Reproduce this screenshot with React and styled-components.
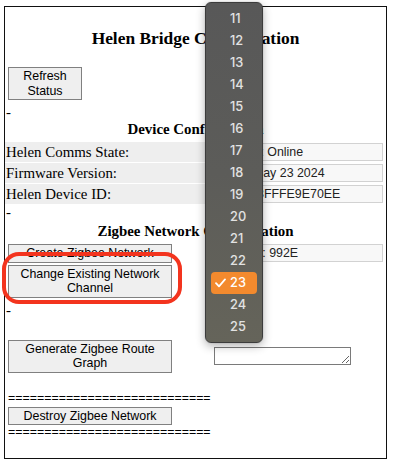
import React from "react";
import styled, { createGlobalStyle } from "styled-components";

const GlobalStyle = createGlobalStyle`
  html, body {
    margin: 0;
    padding: 0;
    background: #fff;
  }
  body {
    font-family: "Liberation Serif", "Times New Roman", serif;
    color: #000;
  }
`;

const Page = styled.div`
  position: relative;
  width: 397px;
  height: 472px;
  padding: 6px 0 0 4px;
  box-sizing: border-box;
  overflow: hidden;
`;

const Frame = styled.div`
  width: 383px;
  height: 453px;
  border: 1px solid #111;
  box-sizing: border-box;
  display: flex;
  flex-direction: column;
`;

const Title = styled.h3`
  margin: 21px 0 0;
  text-align: center;
  font-size: 17.4px;
  line-height: 20px;
  font-weight: 700;
`;

const Heading = styled.h4`
  margin: ${(p) => p.$top || 0}px 0 0;
  text-align: center;
  font-size: 14.9px;
  line-height: 17px;
  font-weight: 700;
`;

const Dash = styled.div`
  margin-top: ${(p) => p.$top || 0}px;
  padding-left: 1px;
  font-size: 14.9px;
  line-height: 17px;
`;

const Button = styled.button`
  display: block;
  width: ${(p) => p.$width || 164}px;
  margin: ${(p) => p.$top || 0}px 0 0 3px;
  padding: 1px 5px;
  box-sizing: border-box;
  border: 1px solid #808080;
  border-radius: 0;
  background: #efefef;
  color: #000;
  font-family: "Liberation Sans", Arial, sans-serif;
  font-size: 12.4px;
  line-height: 14.5px;
  text-align: center;
`;

const InfoGrid = styled.div`
  margin-top: 4px;
  display: grid;
  grid-template-columns: 204px 174px;
  column-gap: 3px;
  row-gap: 1px;
`;

const Label = styled.div`
  height: 20px;
  padding-left: 1px;
  background: #eeeeee;
  font-size: 14.9px;
  line-height: 20px;
  white-space: nowrap;
`;

const Cell = styled.div`
  display: flex;
  align-items: center;
`;

const Field = styled.input`
  width: 171px;
  height: 18px;
  margin: 0;
  padding: 0 2px;
  box-sizing: border-box;
  border: 1px solid #d2d2d2;
  border-radius: 0;
  background: #f8f8f8;
  color: #222;
  font-family: "Liberation Sans", Arial, sans-serif;
  font-size: 12.4px;
`;

const Row = styled.div`
  margin-top: ${(p) => p.$top || 0}px;
  display: grid;
  grid-template-columns: 204px 174px;
  column-gap: 3px;
  align-items: center;
`;

const Picker = styled.select`
  width: 46px;
  height: 18px;
  font-size: 12px;
`;

const Notes = styled.textarea`
  width: 137px;
  height: 18px;
  margin: 0 0 0 2px;
  padding: 0;
  box-sizing: border-box;
  border: 1px solid #7a7a7a;
  resize: both;
  font-size: 12px;
`;

const EqLine = styled.div`
  margin-top: ${(p) => p.$top || 0}px;
  padding-left: 3px;
  font-family: "Liberation Sans", Arial, sans-serif;
  font-size: 12.4px;
  line-height: 15px;
  white-space: nowrap;
`;

const Highlight = styled.div`
  position: absolute;
  left: 2px;
  top: 252px;
  width: 180px;
  height: 52px;
  box-sizing: border-box;
  border: 4px solid #f3341e;
  border-radius: 17px;
  pointer-events: none;
`;

const Popup = styled.div`
  position: absolute;
  left: 205px;
  top: 2px;
  width: 58px;
  height: 341px;
  box-sizing: border-box;
  padding: 5px 0;
  border: 1px solid #3c3c3c;
  border-radius: 6px;
  background: linear-gradient(#585858 0%, #5c5c59 50%, #65645a 100%);
  box-shadow: 0 3px 10px rgba(0, 0, 0, 0.3), 0 0 1px rgba(0, 0, 0, 0.4);
`;

const Item = styled.div`
  position: relative;
  height: 22px;
  margin: 0 ${(p) => (p.$selected ? 5 : 0)}px;
  padding-left: ${(p) => (p.$selected ? 19 : 24)}px;
  border-radius: 4px;
  background: ${(p) => (p.$selected ? "#f38a2e" : "transparent")};
  color: ${(p) => (p.$selected ? "#fff" : "#e2e2e2")};
  font-family: "Inter", "Liberation Sans", sans-serif;
  font-size: 12.8px;
  font-weight: 500;
  line-height: 22px;
`;

const Check = styled.svg`
  position: absolute;
  left: 4px;
  top: 6px;
`;

const channels = [11, 12, 13, 14, 15, 16, 17, 18, 19, 20, 21, 22, 23, 24, 25];

const info = [
  { label: "Helen Comms State:", value: "Network: Online" },
  { label: "Firmware Version:", value: "1.2.10 May 23 2024" },
  { label: "Helen Device ID:", value: "ECD4C3FFFE9E70EE" },
];

const equals = "=".repeat(28);

const App = () => {
  return (
    <Page>
      <GlobalStyle />
      <Frame>
        <Title>Helen Bridge Configuration</Title>
        <Button $width={74} $top={19}>
          Refresh
          <br />
          Status
        </Button>
        <Dash $top={4}>-</Dash>
        <Heading>Device Configuration</Heading>
        <InfoGrid>
          {info.map((row) => (
            <React.Fragment key={row.label}>
              <Label>{row.label}</Label>
              <Cell>
                <Field readOnly value={row.value} />
              </Cell>
            </React.Fragment>
          ))}
        </InfoGrid>
        <Dash>-</Dash>
        <Heading $top={2}>Zigbee Network Configuration</Heading>
        <Row $top={4}>
          <Button>Create Zigbee Network</Button>
          <Cell>
            <Field readOnly value="Net PAN: 992E" />
          </Cell>
        </Row>
        <Row $top={2}>
          <Button>
            Change Existing Network
            <br />
            Channel
          </Button>
          <Cell>
            <Picker defaultValue="23">
              {channels.map((c) => (
                <option key={c} value={c}>
                  {c}
                </option>
              ))}
            </Picker>
          </Cell>
        </Row>
        <Dash $top={4}>-</Dash>
        <Row $top={21}>
          <Button>
            Generate Zigbee Route
            <br />
            Graph
          </Button>
          <Cell>
            <Notes rows={1} />
          </Cell>
        </Row>
        <EqLine $top={18}>{equals}</EqLine>
        <Button $top={1}>Destroy Zigbee Network</Button>
        <EqLine>{equals}</EqLine>
      </Frame>

      <Highlight />

      <Popup>
        {channels.map((c) => (
          <Item key={c} $selected={c === 23}>
            {c === 23 && (
              <Check width="11" height="10" viewBox="0 0 11 10">
                <path
                  d="M1 5.2 L4 8.4 L10 1.4"
                  fill="none"
                  stroke="#fff"
                  strokeWidth="1.8"
                  strokeLinecap="round"
                  strokeLinejoin="round"
                />
              </Check>
            )}
            {c}
          </Item>
        ))}
      </Popup>
    </Page>
  );
};

export default App;
